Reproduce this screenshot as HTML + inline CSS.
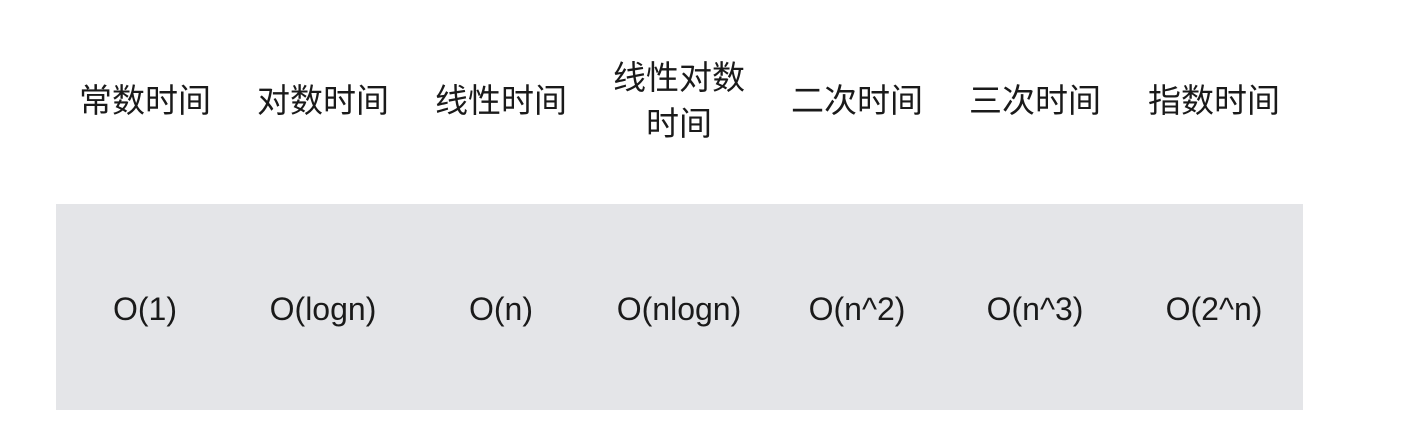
<!DOCTYPE html>
<html><head><meta charset="utf-8"><style>
body{margin:0;width:1416px;height:422px;background:#fff;position:relative;overflow:hidden;font-family:"Liberation Sans","Noto Sans CJK SC",sans-serif;color:#1a1a1a}
.h{position:absolute;width:178px;text-align:center;font-size:33px;line-height:46px;top:78px}
.h2{top:55px}
.bg{position:absolute;left:56px;top:204px;width:1247px;height:206px;background:#e4e5e8}
.v{position:absolute;width:178px;text-align:center;font-size:32px;line-height:40px;top:289px}
</style></head><body>
<div class="h" style="left:56px">常数时间</div>
<div class="h" style="left:234px">对数时间</div>
<div class="h" style="left:412px">线性时间</div>
<div class="h h2" style="left:590px">线性对数<br>时间</div>
<div class="h" style="left:768px">二次时间</div>
<div class="h" style="left:946px">三次时间</div>
<div class="h" style="left:1125px">指数时间</div>
<div class="bg"></div>
<div class="v" style="left:56px">O(1)</div>
<div class="v" style="left:234px">O(logn)</div>
<div class="v" style="left:412px">O(n)</div>
<div class="v" style="left:590px">O(nlogn)</div>
<div class="v" style="left:768px">O(n^2)</div>
<div class="v" style="left:946px">O(n^3)</div>
<div class="v" style="left:1125px">O(2^n)</div>
</body></html>
